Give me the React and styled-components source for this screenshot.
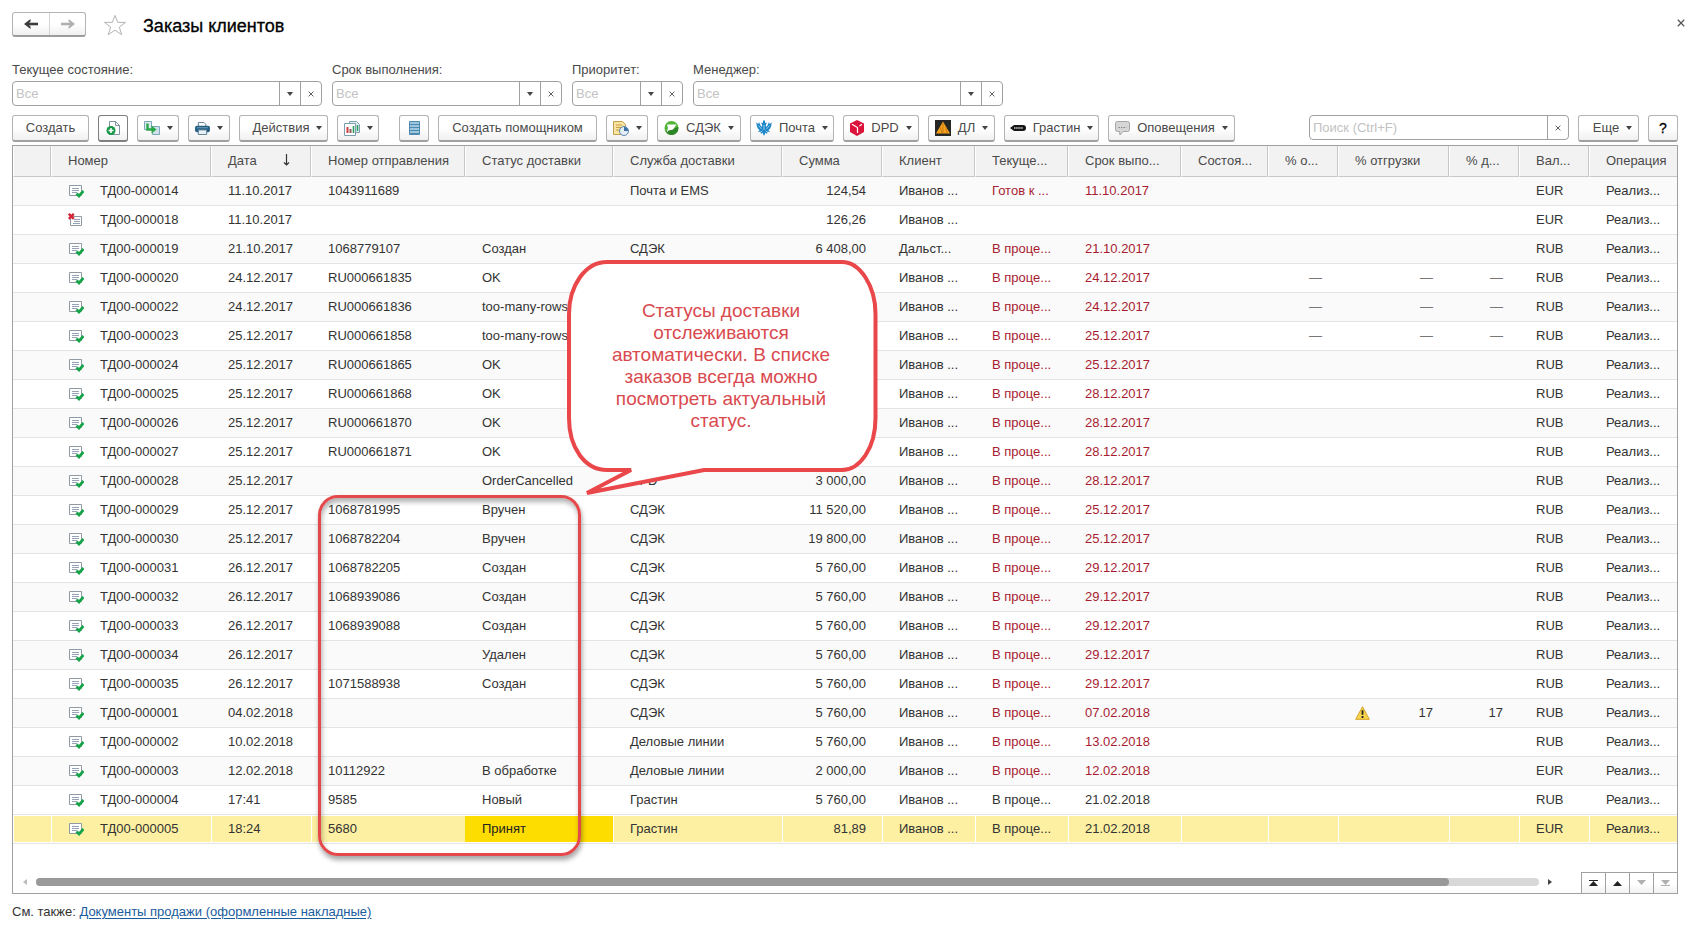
import React from "react";
import styled, { createGlobalStyle, css } from "styled-components";

const GlobalStyle = createGlobalStyle`
  * { box-sizing: border-box; }
  body {
    margin: 0;
    background: #fff;
    color: #333;
    font: 13px/16px "Liberation Sans", Arial, sans-serif;
  }
  button, input, select { font: inherit; color: inherit; }
`;

const Page = styled.main`
  padding: 12px 19px 12px 12px;
`;

const TitleBar = styled.header`
  display: flex;
  align-items: center;
  height: 25px;
  margin-right: -11px;
`;

const NavGroup = styled.div`
  display: flex;
  height: 25px;
  border: 1px solid #b4b4b4;
  border-bottom: 2px solid #9c9c9c;
  border-radius: 3px;
  background: linear-gradient(#fff 50%, #f0f0f0);
`;

const NavButton = styled.button`
  display: grid;
  place-items: center;
  width: 36px;
  padding: 0;
  border: 0;
  background: none;
  color: ${(p) => (p.disabled ? "#b0b0b0" : "#3c3c3c")};
  & + & { border-left: 1px solid #d4d4d4; }
`;

const StarButton = styled.button`
  display: grid;
  place-items: center;
  margin: 0 16px 0 17px;
  padding: 0;
  border: 0;
  background: none;
`;

const Title = styled.h1`
  margin: 0;
  padding-top: 2px;
  color: #000;
  font-size: 18px;
  line-height: 24px;
  font-weight: 400;
  -webkit-text-stroke: 0.3px #000;
`;

const CloseButton = styled.button`
  display: grid;
  place-items: center;
  width: 16px;
  height: 16px;
  margin: 0 0 4px auto;
  padding: 0;
  border: 0;
  background: none;
`;

const Filters = styled.div`
  display: flex;
  gap: 10px;
  margin-top: 25px;
`;

const Filter = styled.div`
  display: flex;
  flex-direction: column;
  gap: 3px;
  width: ${(p) => p.$w}px;
`;

const FilterLabel = styled.label`
  color: #4a4a4a;
`;

const FieldBox = styled.div`
  display: flex;
  height: 25px;
  width: ${(p) => (p.$w ? `${p.$w}px` : "auto")};
  border: 1px solid #a0a0a0;
  border-radius: 4px;
  background: #fff;
`;

const fieldText = css`
  flex: 1;
  min-width: 0;
  padding: 0 3px;
  border: 0;
  outline: 0;
  background: none;
  color: #c2c2c2;
`;

const Select = styled.select`
  ${fieldText}
  appearance: none;
`;

const SearchInput = styled.input`
  ${fieldText}
  &::placeholder { color: #c2c2c2; opacity: 1; }
`;

const FieldPart = styled.span`
  display: grid;
  place-items: center;
  width: 21px;
  border-left: 1px solid #a0a0a0;
`;

const FieldButton = styled.button`
  display: grid;
  place-items: center;
  width: 21px;
  padding: 0;
  border: 0;
  border-left: 1px solid #a0a0a0;
  background: none;
`;

const Toolbar = styled.div`
  display: flex;
  align-items: flex-start;
  gap: 9px;
  margin-top: 9px;
`;

const ToolButton = styled.button`
  display: flex;
  align-items: center;
  justify-content: center;
  gap: 7px;
  flex: none;
  width: ${(p) => p.$w}px;
  height: 27px;
  margin-left: ${(p) => (p.$apart ? 11 : 0)}px;
  padding: 0 0 0 ${(p) => (p.$textMenu ? 8 : 0)}px;
  border: 1px solid ${(p) => (p.$strong ? "#808080" : "#b4b4b4")};
  border-bottom: 2px solid ${(p) => (p.$strong ? "#808080" : "#a0a0a0")};
  border-radius: 3px;
  background: linear-gradient(#fff 50%, #f0f0f0);
  color: #4a4a4a;
  white-space: nowrap;
`;

const HelpMark = styled.span`
  color: #000;
  font-size: 14px;
  -webkit-text-stroke: 0.3px #000;
`;

const SearchSlot = styled.div`
  display: flex;
  justify-content: flex-end;
  flex: 1;
`;

const Panel = styled.section`
  position: relative;
  margin-top: 3px;
  border: 1px solid #a0a0a0;
`;

const Table = styled.table`
  width: 100%;
  table-layout: fixed;
  border-collapse: separate;
  border-spacing: 0;
`;

const HeadCell = styled.th`
  height: 31px;
  padding: 0 4px 0 16px;
  border-bottom: 1px solid #c8c8c8;
  border-left: 1px solid #fff;
  border-right: 1px solid #c8c8c8;
  background: #f2f2f2;
  color: #4a4a4a;
  font-weight: 400;
  text-align: left;
  white-space: nowrap;
  overflow: hidden;
  &:last-child { border-right: 0; }
`;

const SortMark = styled.svg`
  margin-left: 26px;
  vertical-align: -1px;
`;

const Row = styled.tr`
  background: ${(p) => (p.$selected ? "#fdf0a2" : "#fff")};
  &:nth-child(odd) { background: ${(p) => (p.$selected ? "#fdf0a2" : "#fafafa")}; }
`;

const Cell = styled.td`
  height: 29px;
  padding: 0 ${(p) => (p.$right ? 16 : 4)}px 0 17px;
  border-bottom: 1px solid #e4e4e4;
  color: ${(p) => (p.$late ? "#a81c30" : p.$muted ? "#777" : "#333")};
  text-align: ${(p) => (p.$right ? "right" : "left")};
  white-space: nowrap;
  overflow: hidden;
  ${(p) => p.$selected && css`box-shadow: inset 1px 1px #fff, inset 0 -1px #fff;`}
  ${(p) => p.$active && css`
    background: #fddc00;
    color: #222;
    box-shadow: inset 0 1px #fff, inset 0 -1px #fff;
  `}
`;

const Numbered = styled.span`
  display: flex;
  align-items: center;
  gap: 16px;
`;

const Spread = styled.span`
  display: flex;
  align-items: center;
  justify-content: space-between;
`;

const ScrollBar = styled.div`
  display: flex;
  align-items: flex-end;
  height: 49px;
`;

const ScrollArrow = styled.svg`
  flex: none;
  margin: 0 9px 7px;
`;

const Track = styled.div`
  flex: 1;
  height: 8px;
  margin-bottom: 7px;
  border-radius: 4px;
  background: #d8d8d8;
`;

const Thumb = styled.div`
  width: 94%;
  height: 8px;
  border-radius: 4px;
  background: #999;
`;

const Pager = styled.div`
  display: flex;
  margin: 0 -1px -1px 19px;
`;

const PageButton = styled.button`
  display: grid;
  place-items: center;
  width: 25px;
  height: 22px;
  padding: 0;
  border: 1px solid #a0a0a0;
  background: linear-gradient(#fff 50%, #f2f2f2);
  color: ${(p) => (p.disabled ? "#b0b0b0" : "#222")};
  & + & { margin-left: -1px; }
`;

const SeeAlso = styled.footer`
  margin-top: 10px;
`;

const DocLink = styled.a`
  color: #1b5c9e;
  text-underline-offset: 2px;
`;

const Outline = styled.div`
  position: absolute;
  left: 305px;
  top: 349px;
  width: 263px;
  height: 361px;
  border: 3px solid #e5484b;
  border-radius: 20px;
  box-shadow: 1px 4px 5px rgba(0, 0, 0, 0.35), inset 1px 4px 5px rgba(0, 0, 0, 0.3);
  pointer-events: none;
`;

const Callout = styled.aside`
  position: absolute;
  left: 553px;
  top: 112px;
  width: 314px;
  height: 240px;
  padding: 42px 4px 0 0;
  color: #d94a4f;
  font-size: 19px;
  line-height: 22px;
  text-align: center;
`;

const CalloutShape = styled.svg`
  position: absolute;
  inset: 0;
`;

const CalloutText = styled.p`
  position: relative;
  margin: 0;
`;

const Caret = () => (
  <svg width="6" height="4" viewBox="0 0 6 4" aria-hidden="true"><path d="M0 0h6L3 4z" fill="#444" /></svg>
);

const Cross = ({ size = 6 }) => (
  <svg width={size} height={size} viewBox="0 0 7 7" aria-hidden="true">
    <path d="M.7.7l5.6 5.6M6.3.7L.7 6.3" stroke="#555" strokeWidth="1.1" />
  </svg>
);

const Arrow = ({ back }) => (
  <svg width="14" height="10" viewBox="0 0 14 10" aria-hidden="true">
    <path d={back ? "M14 5H3" : "M0 5h11"} stroke="currentColor" strokeWidth="2.600" />
    <path d={back ? "M6.500 0v2.500L4 5l2.500 2.500V10L0 5z" : "M7.500 0v2.500L10 5 7.500 7.500V10L14 5z"} fill="currentColor" />
  </svg>
);

const Star = () => (
  <svg width="24" height="22" viewBox="0 0 24 22" aria-hidden="true">
    <path d="M12 1.400l2.700 7h7.900l-6.300 4.700 2.400 7.600L12 16.200l-6.700 4.500 2.400-7.600L1.400 8.400h7.900z" fill="#fff" stroke="#b4b4b4" />
  </svg>
);

const icons = {
  copy: (
    <svg width="15" height="16" viewBox="0 0 15 16">
      <path d="M3.500 1.500h6l4 4v9h-10z" fill="#fff" stroke="#7d92a3" /><path d="M9.500 1.500v4h4" fill="none" stroke="#7d92a3" />
      <circle cx="5" cy="10.500" r="4.500" fill="#17994a" /><path d="M5 8v5M2.500 10.500h5" stroke="#fff" strokeWidth="1.600" />
    </svg>
  ),
  based: (
    <svg width="16" height="14" viewBox="0 0 16 14">
      <path d="M.5.5h7v8h-7z" fill="#dcebf1" stroke="#7da7b8" /><path d="M8.500 5.500h7v8h-7z" fill="#cfe2ec" stroke="#7da7b8" />
      <path d="M3.500 2.500v6h5" fill="none" stroke="#2aa845" strokeWidth="2.400" /><path d="M7.500 4.500L12.500 8.500l-5 4z" fill="#2aa845" />
    </svg>
  ),
  print: (
    <svg width="15" height="13" viewBox="0 0 16 14">
      <path d="M3.500.5h6l2 2V5h-8z" fill="#fff" stroke="#54788f" /><rect y="4" width="16" height="7" rx="2" fill="#245f85" />
      <path d="M3.500 8.500h9v5h-9z" fill="#e8f1f6" stroke="#54788f" /><path d="M2 6.200h12" stroke="#74a3be" />
    </svg>
  ),
  report: (
    <svg width="16" height="15" viewBox="0 0 16 15">
      <path d="M5.500.5h7l3 3v8h-10z" fill="#e5f0f4" stroke="#7d9fb0" /><path d="M.5 2.500h11v12H.5z" fill="#fff" stroke="#7d9fb0" />
      <path d="M3.500 12V6" stroke="#d43c3c" strokeWidth="2" /><path d="M6.500 12V8" stroke="#8c5a5a" strokeWidth="2" /><path d="M9.500 12V5M13.500 10V4" stroke="#2e9d63" strokeWidth="1.600" />
    </svg>
  ),
  list: (
    <svg width="11" height="14" viewBox="0 0 11 14">
      <rect width="11" height="14" rx="1" fill="#4f8bb0" /><path d="M1 2h9M1 5h9M1 8h9M1 11h9" stroke="#b8dcec" strokeWidth="1.400" />
    </svg>
  ),
  note: (
    <svg width="16" height="16" viewBox="0 0 16 16">
      <path d="M.5 1.500h9l3 3v10H.5z" fill="#f8e3a0" stroke="#c3a04e" /><path d="M3 5h6M3 7.500h6M3 10h4" stroke="#c79f45" />
      <circle cx="11" cy="11" r="4.500" fill="#e4eef7" stroke="#5b82ad" /><path d="M11 11V7a4 4 0 0 1 4 4z" fill="#3a6ea5" />
    </svg>
  ),
  cdek: (
    <svg width="15" height="14" viewBox="0 0 15 14">
      <circle cx="7.500" cy="7" r="7" fill="#52b538" /><path d="M1.500 10.500a7 7 0 0 0 12.500-1L14.400 6z" fill="#2c8527" />
      <path d="M3 3.500h9.500L9 8.500 4.500 9.500 2.500 12l1.500-5z" fill="#fff" />
    </svg>
  ),
  post: (
    <svg width="16" height="16" viewBox="0 0 16 16">
      <path d="M.3 2.500l2 1.500L3 2l1.500 3.500L6 7l.2-2L5 2.500 7 3V.5h2V3l2-.5L9.800 5l.2 2 1.500-1.500L13 2l.7 2 2-1.500-.5 3.500-1 2.500-1.700 1.500 1.500 2-2.500-.5-.5 2.500L9.500 12.500 8 16l-1.500-3.500L5 14l-.5-2.500-2.500.5 1.500-2L1.800 8.500.8 6z" fill="#1b86c9" />
      <path d="M2.500 5.500l3 3.500M13.500 5.500l-3 3.500M8 5v5M6.500 10.500l-1.500 1.500M9.500 10.500l1.500 1.500" stroke="#d5ebf7" strokeWidth=".7" />
    </svg>
  ),
  dpd: (
    <svg width="14" height="16" viewBox="0 0 14 16">
      <path d="M7 0l7 3.500v8.500l-7 4-7-4V3.500z" fill="#dc143c" /><path d="M2 4.200l5.500 3.300v5.500M12 4.200L9.500 6" fill="none" stroke="#fff" strokeWidth="1.200" />
    </svg>
  ),
  dl: (
    <svg width="16" height="16" viewBox="0 0 16 16">
      <rect width="16" height="16" fill="#262626" /><path d="M8 1.500L15 13.500H1z" fill="#f5a11c" /><path d="M8 3v10M5 7l2 6M11 7l1 6" stroke="#b96c10" strokeWidth=".7" />
    </svg>
  ),
  grastin: (
    <svg width="16" height="8" viewBox="0 0 16 8">
      <path d="M0 4l4-3h9q3 0 3 3t-3 3H4z" fill="#161616" /><path d="M4 4h9" stroke="#ccc" strokeWidth="1.600" strokeDasharray="1.500 .6" />
    </svg>
  ),
  chat: (
    <svg width="15" height="15" viewBox="0 0 15 15">
      <path d="M2.500.5h10q2 0 2 2v6q0 2-2 2H8L5 14l-.5-3.500h-2q-2 0-2-2v-6q0-2 2-2z" fill="#d6d6d6" stroke="#a5a5a5" /><path d="M3.500 6.500h8" stroke="#888" strokeWidth="1.200" strokeDasharray="1.500 1" />
    </svg>
  ),
};

const DocIcon = ({ deleted }) => (
  <svg width="16" height="14" viewBox="0 0 16 14" role="img" aria-label={deleted ? "Помечен на удаление" : "Проведен"}>
    {deleted ? (
      <>
        <path d="M2.500 3.500h11v9h-11z" fill="#fff" stroke="#8f9aa5" /><path d="M6 6.500h6M6 8.500h6M5 10.500h7" stroke="#98a2b5" />
        <path d="M.8.8l5 5M5.800.8l-5 5" stroke="#d42636" strokeWidth="2.400" />
      </>
    ) : (
      <>
        <path d="M1.500 1.500h12v10h-12z" fill="#fff" stroke="#8f9aa5" /><path d="M4 4.500h7M4 6.500h7M4 8.500h5" stroke="#98a2b5" />
        <path d="M8.500 9.500l2.500 2.500 4.500-5" fill="none" stroke="#17a349" strokeWidth="2.800" />
      </>
    )}
  </svg>
);

const Warning = () => (
  <svg width="15" height="14" viewBox="0 0 15 14" role="img" aria-label="Внимание">
    <path d="M7.500.7l6.800 12.600H.7z" fill="#f8d64c" stroke="#d5a023" strokeLinejoin="round" /><path d="M7.500 4.200v4.600M7.500 10v2" stroke="#222" strokeWidth="1.800" />
  </svg>
);

const PagerIcon = ({ up, bar }) => (
  <svg width="11" height="8" viewBox="0 0 11 8" aria-hidden="true">
    <path d={up ? "M1 7h9L5.500 2z" : "M1 1h9L5.500 6z"} fill="currentColor" />
    {bar && <path d={up ? "M1 1.500h9" : "M1 6.500h9"} stroke="currentColor" />}
  </svg>
);

const filters = [
  { id: "state", label: "Текущее состояние:", w: 310 },
  { id: "term", label: "Срок выполнения:", w: 230 },
  { id: "priority", label: "Приоритет:", w: 111 },
  { id: "manager", label: "Менеджер:", w: 310 },
];

const tools = [
  { w: 77, text: "Создать" },
  { w: 30, icon: "copy", name: "Скопировать", strong: true },
  { w: 42, icon: "based", name: "Создать на основании", menu: true },
  { w: 42, icon: "print", name: "Печать", menu: true },
  { w: 89, text: "Действия", menu: true },
  { w: 42, icon: "report", name: "Отчеты", menu: true },
  { w: 30, icon: "list", name: "Список", apart: true },
  { w: 159, text: "Создать помощником" },
  { w: 42, icon: "note", name: "История", menu: true },
  { w: 84, icon: "cdek", text: "СДЭК", menu: true },
  { w: 84, icon: "post", text: "Почта", menu: true },
  { w: 76, icon: "dpd", text: "DPD", menu: true },
  { w: 67, icon: "dl", text: "ДЛ", menu: true },
  { w: 95, icon: "grastin", text: "Грастин", menu: true },
  { w: 127, icon: "chat", text: "Оповещения", menu: true },
];

const columns = [
  ["", 38], ["Номер", 160], ["Дата", 100], ["Номер отправления", 154], ["Статус доставки", 148],
  ["Служба доставки", 169], ["Сумма", 100], ["Клиент", 93], ["Текуще...", 93], ["Срок выпо...", 113],
  ["Состоя...", 87], ["% о...", 70], ["% отгрузки", 111], ["% д...", 70], ["Вал...", 70], ["Операция", 88],
];

const P = "В проце...";
const I = "Иванов ...";
const orders = [
  ["14", "11.10.2017", "1043911689", "", "Почта и EMS", "124,54", I, "Готов к ...", "11.10.2017", "", "EUR"],
  ["18", "11.10.2017", "", "", "", "126,26", I, "", "", "", "EUR"],
  ["19", "21.10.2017", "1068779107", "Создан", "СДЭК", "6 408,00", "Дальст...", P, "21.10.2017", "", "RUB"],
  ["20", "24.12.2017", "RU000661835", "OK", "", "0,00", I, P, "24.12.2017", "—", "RUB"],
  ["22", "24.12.2017", "RU000661836", "too-many-rows", "", "", I, P, "24.12.2017", "—", "RUB"],
  ["23", "25.12.2017", "RU000661858", "too-many-rows", "", "", I, P, "25.12.2017", "—", "RUB"],
  ["24", "25.12.2017", "RU000661865", "OK", "", "", I, P, "25.12.2017", "", "RUB"],
  ["25", "25.12.2017", "RU000661868", "OK", "", "", I, P, "28.12.2017", "", "RUB"],
  ["26", "25.12.2017", "RU000661870", "OK", "", "", I, P, "28.12.2017", "", "RUB"],
  ["27", "25.12.2017", "RU000661871", "OK", "", "", I, P, "28.12.2017", "", "RUB"],
  ["28", "25.12.2017", "", "OrderCancelled", "DPD", "3 000,00", I, P, "28.12.2017", "", "RUB"],
  ["29", "25.12.2017", "1068781995", "Вручен", "СДЭК", "11 520,00", I, P, "25.12.2017", "", "RUB"],
  ["30", "25.12.2017", "1068782204", "Вручен", "СДЭК", "19 800,00", I, P, "25.12.2017", "", "RUB"],
  ["31", "26.12.2017", "1068782205", "Создан", "СДЭК", "5 760,00", I, P, "29.12.2017", "", "RUB"],
  ["32", "26.12.2017", "1068939086", "Создан", "СДЭК", "5 760,00", I, P, "29.12.2017", "", "RUB"],
  ["33", "26.12.2017", "1068939088", "Создан", "СДЭК", "5 760,00", I, P, "29.12.2017", "", "RUB"],
  ["34", "26.12.2017", "", "Удален", "СДЭК", "5 760,00", I, P, "29.12.2017", "", "RUB"],
  ["35", "26.12.2017", "1071588938", "Создан", "СДЭК", "5 760,00", I, P, "29.12.2017", "", "RUB"],
  ["01", "04.02.2018", "", "", "СДЭК", "5 760,00", I, P, "07.02.2018", "17", "RUB"],
  ["02", "10.02.2018", "", "", "Деловые линии", "5 760,00", I, P, "13.02.2018", "", "RUB"],
  ["03", "12.02.2018", "10112922", "В обработке", "Деловые линии", "2 000,00", I, P, "12.02.2018", "", "EUR"],
  ["04", "17:41", "9585", "Новый", "Грастин", "5 760,00", I, P, "21.02.2018", "", "RUB"],
  ["05", "18:24", "5680", "Принят", "Грастин", "81,89", I, P, "21.02.2018", "", "EUR"],
];

function OrderRow({ order, selected }) {
  const [no, date, parcel, status, service, sum, client, state, due, pct, currency] = order;
  const late = due !== "21.02.2018";
  const warned = pct === "17";
  const muted = pct === "—";
  const s = { $selected: selected };
  return (
    <Row {...s} aria-selected={selected}>
      <Cell {...s} />
      <Cell {...s}><Numbered><DocIcon deleted={no === "18"} />{`ТД00-0000${no}`}</Numbered></Cell>
      <Cell {...s}>{date}</Cell>
      <Cell {...s}>{parcel}</Cell>
      <Cell {...s} $active={selected}>{status}</Cell>
      <Cell {...s}>{service}</Cell>
      <Cell {...s} $right>{sum}</Cell>
      <Cell {...s}>{client}</Cell>
      <Cell {...s} $late={late}>{state}</Cell>
      <Cell {...s} $late={late}>{due}</Cell>
      <Cell {...s} />
      <Cell {...s} $right $muted={muted}>{warned ? "" : pct}</Cell>
      <Cell {...s} $right $muted={muted}>{warned ? <Spread><Warning />{pct}</Spread> : pct}</Cell>
      <Cell {...s} $right $muted={muted}>{pct}</Cell>
      <Cell {...s}>{currency}</Cell>
      <Cell {...s}>Реализ...</Cell>
    </Row>
  );
}

export default function App() {
  return (
    <Page>
      <GlobalStyle />
      <TitleBar>
        <NavGroup>
          <NavButton aria-label="Назад"><Arrow back /></NavButton>
          <NavButton aria-label="Вперед" disabled><Arrow /></NavButton>
        </NavGroup>
        <StarButton aria-label="В избранное"><Star /></StarButton>
        <Title>Заказы клиентов</Title>
        <CloseButton aria-label="Закрыть"><Cross size={8} /></CloseButton>
      </TitleBar>

      <Filters>
        {filters.map((f) => (
          <Filter key={f.id} $w={f.w}>
            <FilterLabel htmlFor={f.id}>{f.label}</FilterLabel>
            <FieldBox>
              <Select id={f.id}><option>Все</option></Select>
              <FieldPart><Caret /></FieldPart>
              <FieldButton aria-label="Очистить"><Cross /></FieldButton>
            </FieldBox>
          </Filter>
        ))}
      </Filters>

      <Toolbar>
        {tools.map((t) => (
          <ToolButton
            key={t.text || t.name}
            $w={t.w}
            $apart={t.apart}
            $strong={t.strong}
            $textMenu={t.menu && !t.icon}
            aria-label={t.name}
          >
            {t.icon && icons[t.icon]}
            {t.text}
            {t.menu && <Caret />}
          </ToolButton>
        ))}
        <SearchSlot>
          <FieldBox $w={260}>
            <SearchInput aria-label="Поиск" placeholder="Поиск (Ctrl+F)" />
            <FieldButton aria-label="Очистить поиск"><Cross /></FieldButton>
          </FieldBox>
        </SearchSlot>
        <ToolButton $w={61} $textMenu>Еще<Caret /></ToolButton>
        <ToolButton $w={30} aria-label="Справка"><HelpMark>?</HelpMark></ToolButton>
      </Toolbar>

      <Panel>
        <Table>
          <colgroup>{columns.map(([name, w], i) => <col key={i} width={w} />)}</colgroup>
          <thead>
            <tr>
              {columns.map(([name], i) => (
                <HeadCell key={i} scope="col">
                  {name}
                  {name === "Дата" && (
                    <SortMark width="7" height="12" viewBox="0 0 7 12" aria-hidden="true">
                      <path d="M3.500 0v10.500M1 8.500l2.500 2.500L6 8.500" fill="none" stroke="#333" strokeWidth="1.200" />
                    </SortMark>
                  )}
                </HeadCell>
              ))}
            </tr>
          </thead>
          <tbody>
            {orders.map((o, i) => <OrderRow key={o[0]} order={o} selected={i === orders.length - 1} />)}
          </tbody>
        </Table>

        <ScrollBar>
          <ScrollArrow width="5" height="8" viewBox="0 0 5 8" aria-hidden="true"><path d="M5 1v6L1 4z" fill="#bbb" /></ScrollArrow>
          <Track><Thumb /></Track>
          <ScrollArrow width="5" height="8" viewBox="0 0 5 8" aria-hidden="true"><path d="M0 1v6l4-3z" fill="#444" /></ScrollArrow>
          <Pager>
            <PageButton aria-label="В начало"><PagerIcon up bar /></PageButton>
            <PageButton aria-label="Страница вверх"><PagerIcon up /></PageButton>
            <PageButton aria-label="Страница вниз" disabled><PagerIcon /></PageButton>
            <PageButton aria-label="В конец" disabled><PagerIcon bar /></PageButton>
          </Pager>
        </ScrollBar>

        <Outline />
        <Callout>
          <CalloutShape width="314" height="240" viewBox="0 0 314 240" aria-hidden="true">
            <path
              d="M41 4H276C294 4 309.500 28 309.500 56V160C309.500 190 294 212 276 212H138L21 235 65 212H41C19 212 3 190 3 160V56C3 28 19 4 41 4Z"
              fill="#fff" stroke="#ea474a" strokeWidth="4"
            />
          </CalloutShape>
          <CalloutText>
            Статусы доставки<br />отслеживаются<br />автоматически. В списке<br />заказов всегда можно<br />посмотреть актуальный<br />статус.
          </CalloutText>
        </Callout>
      </Panel>

      <SeeAlso>См. также: <DocLink href="#sales">Документы продажи (оформленные накладные)</DocLink></SeeAlso>
    </Page>
  );
}
